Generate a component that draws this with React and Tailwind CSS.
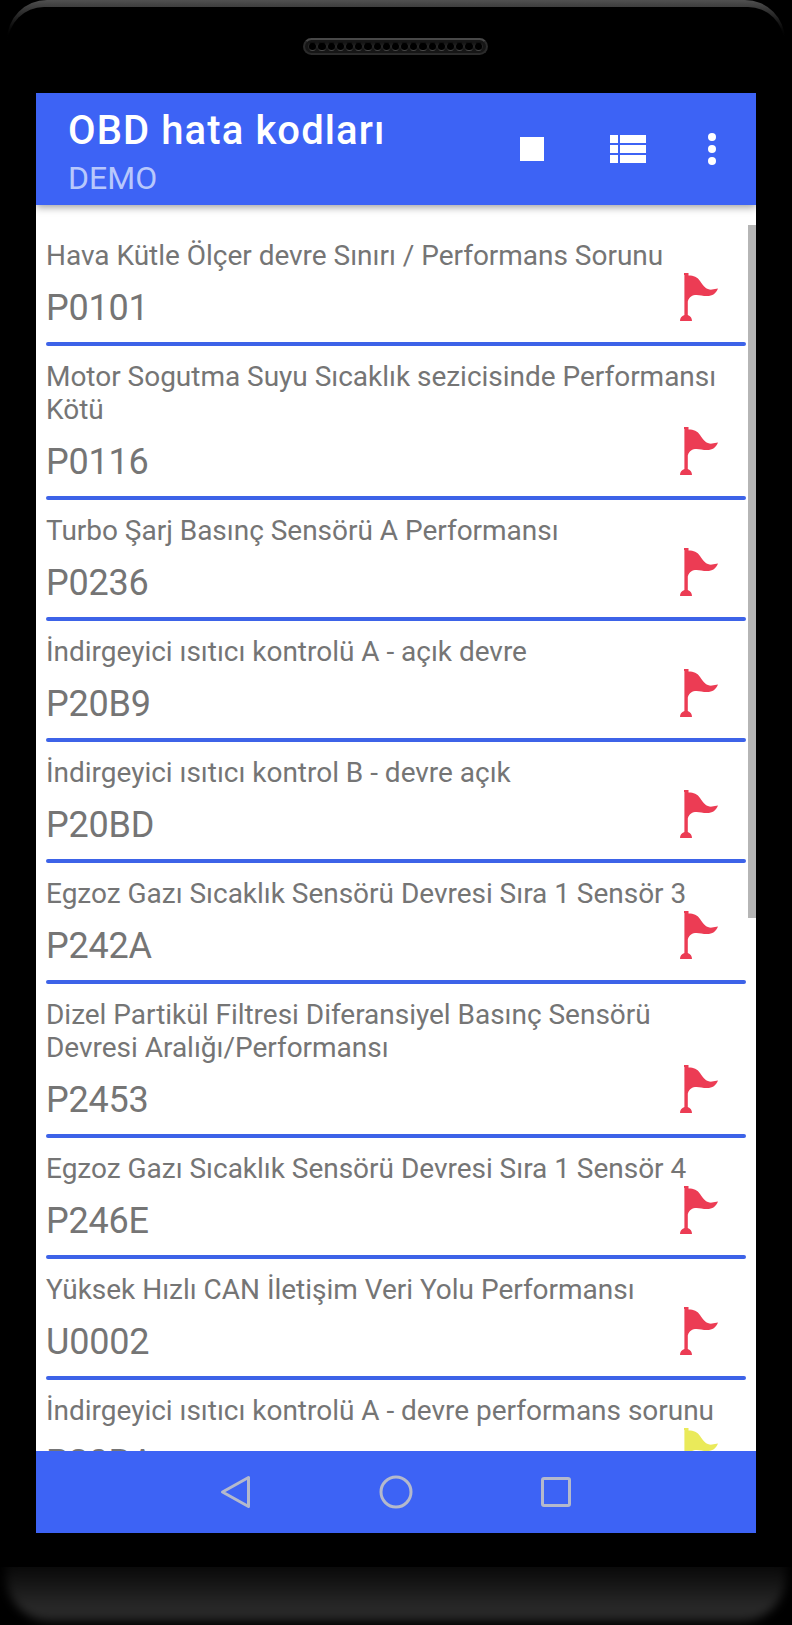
const codes = [
  { title: "Hava Kütle Ölçer devre Sınırı / Performans Sorunu", code: "P0101" },
  { title: "Motor Sogutma Suyu Sıcaklık sezicisinde Performansı Kötü", code: "P0116" },
  { title: "Turbo Şarj Basınç Sensörü A Performansı", code: "P0236" },
  { title: "İndirgeyici ısıtıcı kontrolü A - açık devre", code: "P20B9" },
  { title: "İndirgeyici ısıtıcı kontrol B - devre açık", code: "P20BD" },
  { title: "Egzoz Gazı Sıcaklık Sensörü Devresi Sıra 1 Sensör 3", code: "P242A" },
  { title: "Dizel Partikül Filtresi Diferansiyel Basınç Sensörü Devresi Aralığı/Performansı", code: "P2453" },
  { title: "Egzoz Gazı Sıcaklık Sensörü Devresi Sıra 1 Sensör 4", code: "P246E" },
  { title: "Yüksek Hızlı CAN İletişim Veri Yolu Performansı", code: "U0002" },
  { title: "İndirgeyici ısıtıcı kontrolü A - devre performans sorunu", code: "P20BA", pending: true },
];

function Flag({ className }) {
  return (
    <svg viewBox="0 0 38 48" className={className} fill="currentColor">
      <path d="M4 0h4.500v2.600C14 2.600 17 4 20 8c4 6 7 9 12 8.600L38 15.500C36 20.500 32.500 23 27 23c-5 0-8-1.500-12-1-4 .6-6.500 3.500-7.200 6.500V42c2.700 1 4.200 3 4.200 6H0c0-3 1.500-5 4.400-6V2H4z" />
    </svg>
  );
}

function Speaker() {
  return (
    <div className="ml-[303px] flex h-[17px] w-[185px] items-center justify-center rounded-full border-2 border-[#2b2b2b] border-t-[#484848] bg-[#161616]">
      {Array.from({ length: 19 }, (_, i) => (
        <span key={i} className="h-[9px] w-[9.2px] rounded-full border border-t-[#111] border-x-[#282828] border-b-[#484848] bg-black" />
      ))}
    </div>
  );
}

function AppBar() {
  return (
    <header className="z-10 flex h-28 shrink-0 items-center bg-[#3d63f5] pl-8 text-white shadow-[0_2px_8px_rgba(0,0,0,0.4)]">
      <div className="flex-1 pt-2.5">
        <h1 className="text-[40px] leading-[47px] font-medium tracking-[1.1px]">OBD hata kodları</h1>
        <p className="mt-px text-[32px] leading-[47px] text-[#b8c8fc]">DEMO</p>
      </div>
      <div className="flex items-center pr-10">
        <span className="mr-[66px] size-6 bg-white" />
        <svg viewBox="0 0 36 28" className="mr-[62px] h-7 w-9" fill="currentColor">
          <path d="M0 0h8v8H0zM10 0h26v8H10zM0 10h8v8H0zM10 10h26v8H10zM0 20h8v8H0zM10 20h26v8H10z" />
        </svg>
        <div className="flex flex-col gap-1">
          <span className="size-2 rounded-full bg-white" />
          <span className="size-2 rounded-full bg-white" />
          <span className="size-2 rounded-full bg-white" />
        </div>
      </div>
    </header>
  );
}

function CodeRow({ title, code, pending }) {
  return (
    <li className="shrink-0">
      <p className="pt-3.5 text-[28px] leading-[33px] tracking-[-0.02px]">{title}</p>
      <div className="flex h-[70px] justify-between pr-7">
        <span className="pt-[15px] text-[36px] leading-[42px] tracking-[-0.2px]">{code}</span>
        <Flag className={pending ? "mt-px h-12 w-[38px] text-[#eaea5a]" : "mt-px h-12 w-[38px] text-[#ec3c54]"} />
      </div>
      <div className="h-1 rounded-full bg-[#3d63e8]" />
    </li>
  );
}

function NavBar() {
  return (
    <nav className="flex h-[82px] shrink-0 items-center justify-center gap-[127px] bg-[#3d63f5] text-[#b4b9cc]">
      <svg viewBox="0 0 32 34" className="h-[34px] w-8" fill="none" stroke="currentColor" strokeWidth="3" strokeLinejoin="round">
        <path d="M28.500 2.500v29L2.500 17z" />
      </svg>
      <svg viewBox="0 0 34 34" className="size-[34px]" fill="none" stroke="currentColor" strokeWidth="3">
        <circle cx="17" cy="17" r="15" />
      </svg>
      <svg viewBox="0 0 32 32" className="size-8" fill="none" stroke="currentColor" strokeWidth="3">
        <rect x="2.500" y="2.500" width="27" height="27" rx="1.500" />
      </svg>
    </nav>
  );
}

export default function App() {
  return (
    <div className="relative flex h-[1625px] w-[792px] flex-col overflow-hidden bg-black font-[Roboto,sans-serif]">
      <div className="absolute inset-x-[7px] top-0 h-[120px] rounded-t-[40px] bg-linear-to-b from-[#505050] to-black to-[42px]" />
      <div className="absolute inset-x-2 top-[7px] h-[120px] rounded-t-[36px] bg-black" />
      <div className="relative h-[93px] shrink-0 pt-[38px]">
        <Speaker />
      </div>
      <main className="relative mx-9 flex h-[1440px] shrink-0 flex-col overflow-hidden bg-white">
        <AppBar />
        <div className="flex min-h-0 flex-1 overflow-hidden pt-5">
          <ul className="ml-2.5 flex w-[700px] flex-col text-[#757575]">
            {codes.map((item) => (
              <CodeRow key={item.code} {...item} />
            ))}
          </ul>
          <div className="ml-0.5 h-[693px] w-2 bg-[#b5b5b5]" />
        </div>
        <NavBar />
      </main>
      <div className="relative mt-[34px] h-[58px] shrink-0 overflow-hidden">
        <div className="absolute inset-x-1.5 -top-10 bottom-1 rounded-b-[44px] bg-linear-to-b from-[#080808] from-40% to-[#282828] to-85% blur-[5px]" />
      </div>
    </div>
  );
}
